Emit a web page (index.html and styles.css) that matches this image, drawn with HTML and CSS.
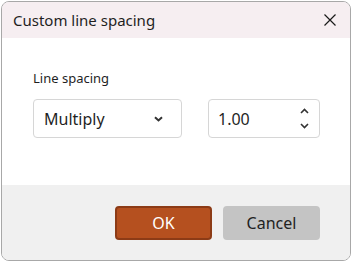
FILE: index.html
```html
<!DOCTYPE html>
<html>
<head>
    <title>Custom line spacing</title>
    <meta charset="UTF-8">
    <link rel="stylesheet" href="styles.css">
</head>
<body>
    <div class="dialog">
        <div class="titlebar">
            <span class="title">Custom line spacing</span>
            <button class="close" aria-label="Close">
                <svg width="12" height="12" viewBox="0 0 12 12">
                    <path d="M0.5 0.5 L11.5 11.5 M11.5 0.5 L0.5 11.5" stroke="#1a1a1a" stroke-width="1.2" fill="none"/>
                </svg>
            </button>
        </div>
        <div class="content">
            <label class="field-label">Line spacing</label>
            <div class="row">
                <div class="select">
                    <span>Multiply</span>
                    <svg width="9" height="6" viewBox="0 0 9 6">
                        <path d="M1 1.2 L4.5 4.5 L8 1.2" stroke="#333" stroke-width="2" fill="none"/>
                    </svg>
                </div>
                <div class="spin">
                    <span>1.00</span>
                    <div class="arrows">
                        <svg width="9" height="6" viewBox="0 0 9 6">
                            <path d="M1 5 L4.5 1.5 L8 5" stroke="#333" stroke-width="1.6" fill="none"/>
                        </svg>
                        <svg width="9" height="6" viewBox="0 0 9 6">
                            <path d="M1 1 L4.5 4.5 L8 1" stroke="#333" stroke-width="1.6" fill="none"/>
                        </svg>
                    </div>
                </div>
            </div>
        </div>
        <div class="footer">
            <button class="btn ok">OK</button>
            <button class="btn cancel">Cancel</button>
        </div>
    </div>
</body>
</html>
```

FILE: styles.css
```css
html, body {
    margin: 0;
    padding: 0;
    background: #fff;
}
body {
    padding: 1px;
    font-family: "Noto Sans", "Open Sans", sans-serif;
    color: #1f1f1f;
}
.dialog {
    width: 348px;
    height: 258px;
    border: 1px solid #a8a8a8;
    border-radius: 8px;
    overflow: hidden;
    display: flex;
    flex-direction: column;
}
.titlebar {
    height: 36px;
    background: #f6eef1;
    display: flex;
    align-items: center;
    justify-content: space-between;
    padding: 0 14px 0 11px;
}
.title {
    font-size: 15px;
}
.close {
    border: none;
    background: none;
    padding: 0;
    display: flex;
}
.content {
    height: 147px;
    background: #fff;
    padding: 31px 0 0 31px;
    box-sizing: border-box;
}
.field-label {
    display: block;
    font-size: 13px;
    margin-bottom: 12px;
}
.row {
    display: flex;
    gap: 26px;
}
.select, .spin {
    height: 39px;
    box-sizing: border-box;
    border: 1px solid #d6d6d6;
    border-radius: 4px;
    display: flex;
    align-items: center;
    justify-content: space-between;
    font-size: 16px;
}
.select {
    width: 149px;
    padding: 0 18px 0 10px;
}
.spin {
    width: 112px;
    padding: 0 10px 0 9px;
}
.arrows {
    display: flex;
    flex-direction: column;
    gap: 9px;
}
.arrows svg {
    display: block;
}
.footer {
    flex: 1;
    background: #f0f0f0;
    display: flex;
    justify-content: flex-end;
    align-items: flex-start;
    gap: 11px;
    padding: 21px 30px 0 0;
}
.btn {
    width: 97px;
    height: 34px;
    border-radius: 4px;
    font-family: "Noto Sans", "Open Sans", sans-serif;
    font-size: 16px;
    padding: 0;
}
.ok {
    background: #b5501f;
    border: 2px solid #8c3b16;
    color: #fff;
}
.cancel {
    background: #c4c4c4;
    border: none;
    color: #222;
}
```
